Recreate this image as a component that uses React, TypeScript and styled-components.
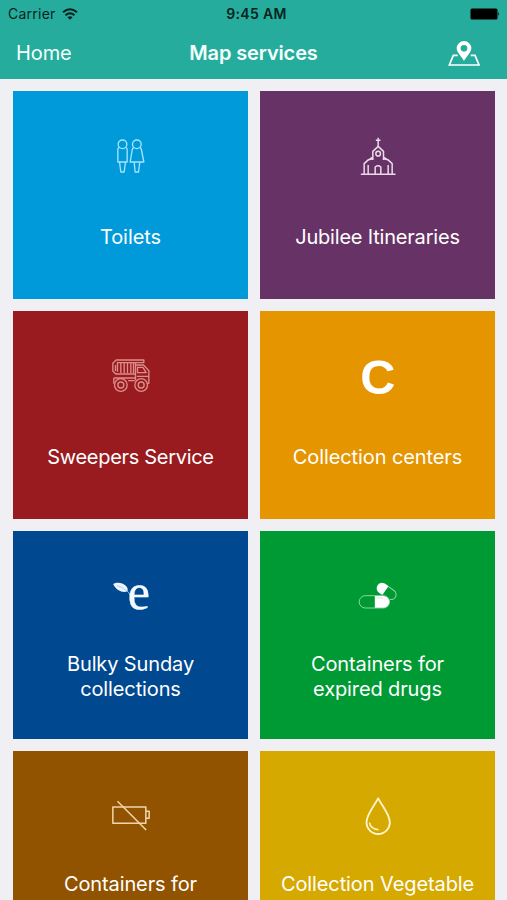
import React from "react";
import styled, { createGlobalStyle } from "styled-components";

const GlobalStyle = createGlobalStyle`
  html, body { margin: 0; padding: 0; background: #efeff4; }
  body { overflow: hidden; font-family: Inter, "Liberation Sans", sans-serif; }
`;

const Screen = styled.div`
  width: 507px;
  height: 900px;
  overflow: hidden;
  background: #efeff4;
`;

const Header = styled.header`
  height: 79px;
  background: #26ac9c;
`;

const StatusBar = styled.div`
  height: 27px;
  display: grid;
  grid-template-columns: 1fr auto 1fr;
  align-items: center;
  padding: 0 7px 0 8px;
  color: #06231f;
`;

const Carrier = styled.div`
  display: flex;
  align-items: center;
  gap: 6px;
  font-size: 14px;
  letter-spacing: 0.25px;
  line-height: 27px;
`;

const Clock = styled.div`
  margin-left: 5px;
  font-size: 14px;
  font-weight: 600;
  letter-spacing: 0.35px;
  line-height: 27px;
`;

const BatterySlot = styled.div`
  display: flex;
  justify-content: flex-end;
`;

const NavBar = styled.nav`
  height: 52px;
  display: grid;
  grid-template-columns: 1fr auto 1fr;
  align-items: center;
  padding: 0 26px 0 16px;
  color: #f4fffd;
`;

const BackLink = styled.a`
  font-size: 20px;
  letter-spacing: -0.1px;
  line-height: 52px;
`;

const Title = styled.h1`
  margin: 0 0 0 10px;
  font-size: 20px;
  font-weight: 600;
  letter-spacing: -0.13px;
  line-height: 52px;
`;

const MapButton = styled.button`
  justify-self: end;
  display: flex;
  padding: 0;
  border: 0;
  background: none;
`;

const Grid = styled.main`
  display: grid;
  grid-template-columns: 235px 235px;
  grid-auto-rows: 208px;
  gap: 12px;
  padding: 12px 13px;
`;

const Tile = styled.section<{ $color: string }>`
  display: flex;
  flex-direction: column;
  align-items: center;
  box-sizing: border-box;
  padding-top: 34px;
  background: ${(p) => p.$color};
  color: #fff;
`;

const TileIcon = styled.svg`
  flex: none;
  width: 60px;
  height: 60px;
  fill: none;
  stroke-linejoin: round;
`;

const LabelArea = styled.div`
  height: 50px;
  margin-top: 27px;
  display: flex;
  flex-direction: column;
  justify-content: center;
`;

const Label = styled.div<{ $spacing: number; $lines: number }>`
  min-height: ${(p) => p.$lines * 25}px;
  font-size: 20px;
  line-height: 25px;
  letter-spacing: ${(p) => p.$spacing}px;
  text-align: center;
  white-space: pre-line;
`;

const Toilets = () => (
  <g stroke="#a6e4fb" strokeWidth="4">
    <circle cx="66" cy="58" r="13" />
    <path d="M56 68h-1q-3 2-3 7v36h28V75q0-5-3-7M57 111l4 30h10l4-30" />
    <circle cx="109" cy="58" r="13" />
    <path d="M99 68q-3 2-4 7l-6 36h41l-7-36q-1-5-4-7M101 111l3 30h10l4-30" />
  </g>
);

const Church = () => (
  <g stroke="#ead9ea" strokeWidth="4.500">
    <path d="M92 38v28M85 46h14M76 105V79l16-15 16 15v26M76 96l-15 10M108 96l15 10M50 147v-31l13-12 13-3M134 147v-31l-13-12-13-3M62 120v27M122 120v27M83 147v-21q9-7 17 0v21M40 148h104" />
    <circle cx="92" cy="86" r="7" />
  </g>
);

const Truck = () => (
  <g stroke="#dc8f89" strokeWidth="4">
    <path d="M37 55l10-10h83v8H105v34H46l-9-9zM49 53h54M51 53v27M61 53v31M71 53v31M81 53v31M91 53v31M99 53v31M45 60v18M105 60h24l16 17v38h-6M111 67h16l10 16h-26zM105 88v18M109 94h34M40 99h66M40 99v17M83 107h20" />
    <circle cx="61" cy="120" r="19" />
    <circle cx="61" cy="120" r="9" />
    <circle cx="122" cy="120" r="19" />
    <circle cx="122" cy="120" r="9" />
  </g>
);

const LetterC = () => (
  <text x="91" y="147" textAnchor="middle" fontFamily="Liberation Sans, sans-serif" fontWeight="700" fontSize="146" fill="#fff">
    C
  </text>
);

const LeafE = () => (
  <>
    <path d="M38 57c9-6 27-6 38 5 7 7 6 13 5 17-14 5-33-1-43-22z" fill="#e9f5ff" />
    <path d="M50 62q17 5 27 15" stroke="#7fa6cf" strokeWidth="1.500" />
    <path d="M78 76q7 5 11 14" stroke="#a9cbe9" strokeWidth="3" />
    <text x="115" y="131" textAnchor="middle" fontFamily="Liberation Serif, serif" fontSize="150" fill="#f4faff" stroke="#f4faff" strokeWidth="1">
      e
    </text>
  </>
);

const Pills = () => (
  <>
    <g transform="rotate(35 117 79)">
      <rect x="86" y="64" width="63" height="30" rx="15" stroke="#8bd4a0" strokeWidth="3" />
      <path d="M113 63h-12a16 16 0 0 0 0 32h12z" fill="#fff" />
    </g>
    <rect x="33" y="89" width="95" height="42" rx="20" fill="#009a35" />
    <rect x="35" y="92" width="91" height="37" rx="18.5" stroke="#8bd4a0" strokeWidth="3" />
    <path d="M82 93h26a17.500 17.500 0 0 1 0 35H82z" fill="#fff" />
    <path d="M89 99h17" stroke="#b5e3c1" strokeWidth="2" />
  </>
);

const BatteryOff = () => (
  <g stroke="#f0d5ad" strokeWidth="4.500">
    <path d="M37 66h99v49H37zM137 79h9v21h-9" />
    <path d="M51 49l86 86" />
  </g>
);

const Drop = () => (
  <g stroke="#fff6cf" strokeWidth="5.500">
    <path d="M92 40C80 63 57 88 57 112a35 35 0 0 0 70 0C127 88 104 63 92 40z" />
    <path d="M66 113q3 19 27 21" strokeWidth="4.500" />
  </g>
);

const services = [
  { label: "Toilets", color: "#009ada", icon: Toilets, spacing: -0.05, lines: 1 },
  { label: "Jubilee Itineraries", color: "#673366", icon: Church, spacing: -0.2, lines: 1 },
  { label: "Sweepers Service", color: "#991b20", icon: Truck, spacing: -0.3, lines: 1 },
  { label: "Collection centers", color: "#e59500", icon: LetterC, spacing: -0.1, lines: 1 },
  { label: "Bulky Sunday\ncollections", color: "#004990", icon: LeafE, spacing: -0.12, lines: 2 },
  { label: "Containers for\nexpired drugs", color: "#009a35", icon: Pills, spacing: -0.12, lines: 2 },
  { label: "Containers for", color: "#925300", icon: BatteryOff, spacing: -0.12, lines: 2 },
  { label: "Collection Vegetable", color: "#d6a900", icon: Drop, spacing: -0.1, lines: 2 },
];

export default function App() {
  return (
    <Screen>
      <GlobalStyle />
      <Header>
        <StatusBar>
          <Carrier>
            Carrier
            <svg width="16" height="12" viewBox="0 0 16 12" fill="none" stroke="#06231f" strokeWidth="2">
              <path d="M1 4.300q7-6 14 0M3.500 7.200q4.500-3.800 9 0" />
              <path d="M5.400 9.200q2.600-2 5.200 0L8 11.800z" fill="#06231f" stroke="none" />
            </svg>
          </Carrier>
          <Clock>9:45 AM</Clock>
          <BatterySlot>
            <svg width="30" height="12" viewBox="0 0 30 12" fill="#000">
              <rect x="0.500" y="0.500" width="27" height="11" rx="1.500" />
              <path d="M28.300 4q1.700 2 0 4z" />
            </svg>
          </BatterySlot>
        </StatusBar>
        <NavBar>
          <BackLink>Home</BackLink>
          <Title>Map services</Title>
          <MapButton aria-label="Show map">
            <svg width="33" height="27" viewBox="39 27 99 81" fill="none">
              <path d="M68 73H55L43 102h89l-12-29h-13" stroke="#fff" strokeWidth="5" />
              <path fillRule="evenodd" d="M87 30a22 22 0 0 0-22 22c0 12 14 24 22 38 8-14 22-26 22-38a22 22 0 0 0-22-22zm0 12a10 10 0 1 1 0 20 10 10 0 0 1 0-20z" fill="#fff" />
            </svg>
          </MapButton>
        </NavBar>
      </Header>
      <Grid>
        {services.map(({ label, color, icon: Icon, spacing, lines }) => (
          <Tile key={color} $color={color}>
            <TileIcon viewBox="1.5 0 180 180">
              <Icon />
            </TileIcon>
            <LabelArea>
              <Label $spacing={spacing} $lines={lines}>
                {label}
              </Label>
            </LabelArea>
          </Tile>
        ))}
      </Grid>
    </Screen>
  );
}
